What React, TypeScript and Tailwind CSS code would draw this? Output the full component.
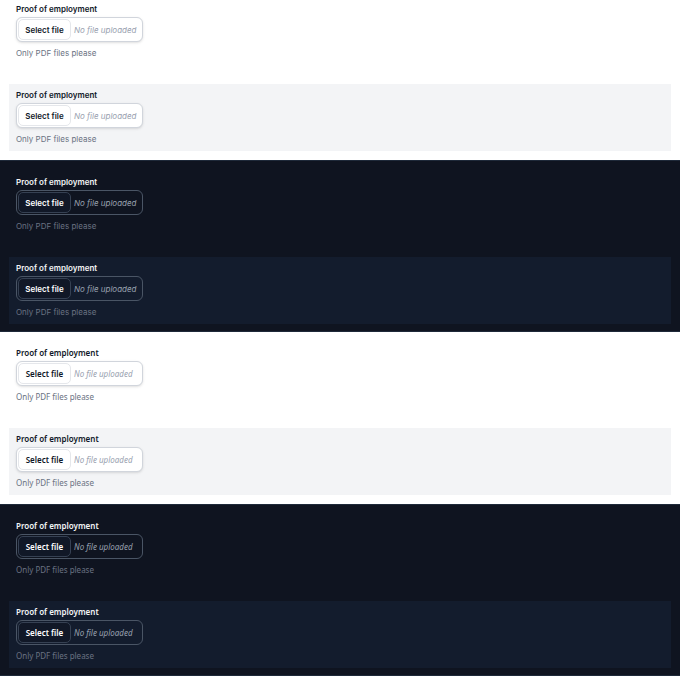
import React from 'react';

type Theme = 'light' | 'dark';

// one upload field: label, file picker, help text
function UploadField({ theme, font }: { theme: Theme; font: string }) {
  const dark = theme === 'dark';
  return (
    <div className={`flex flex-col items-start px-[7px] pt-[5px] pb-[6px] ${font}`}>
      <label className={`mb-[2px] text-[8px] leading-[12px] font-semibold ${dark ? 'text-gray-100' : 'text-gray-900'}`}>
        Proof of employment
      </label>
      <div
        className={`flex h-[25px] w-[127px] items-stretch rounded-[6px] border p-px ${
          dark ? 'border-gray-600 bg-transparent' : 'border-gray-300 bg-white shadow-sm'
        }`}
      >
        <button
          className={`flex w-[53px] items-center justify-center rounded-[5px] border text-[8px] font-semibold ${
            dark ? 'border-gray-700 bg-[#111827] text-white' : 'border-gray-200 bg-white text-gray-900'
          }`}
        >
          Select file
        </button>
        <span className="flex items-center pl-[3px] text-[8px] italic text-gray-400">
          No file uploaded
        </span>
      </div>
      <p className="mt-[5px] text-[8px] leading-[12px] text-gray-500">
        Only PDF files please
      </p>
    </div>
  );
}

// a plain variant followed by the same field on a tinted panel
function Pair({ theme, font }: { theme: Theme; font: string }) {
  const dark = theme === 'dark';
  return (
    <section
      className={`h-[172px] px-[9px] pt-[10px] ${
        dark ? 'border-y border-gray-800 bg-[#0f1420]' : 'bg-white'
      }`}
    >
      <UploadField theme={theme} font={font} />
      <div className={`mt-[19px] ${dark ? 'bg-[#131c2d]' : 'bg-gray-100'}`}>
        <UploadField theme={theme} font={font} />
      </div>
    </section>
  );
}

export default function App() {
  const inter = "font-['Inter',sans-serif]";
  const noto = "font-['Noto_Sans',sans-serif]";
  return (
    <div className="h-[677px] w-[680px] overflow-hidden bg-white">
      <div className="-mt-3">
        <Pair theme="light" font={inter} />
        <Pair theme="dark" font={inter} />
        <Pair theme="light" font={noto} />
        <Pair theme="dark" font={noto} />
      </div>
    </div>
  );
}
